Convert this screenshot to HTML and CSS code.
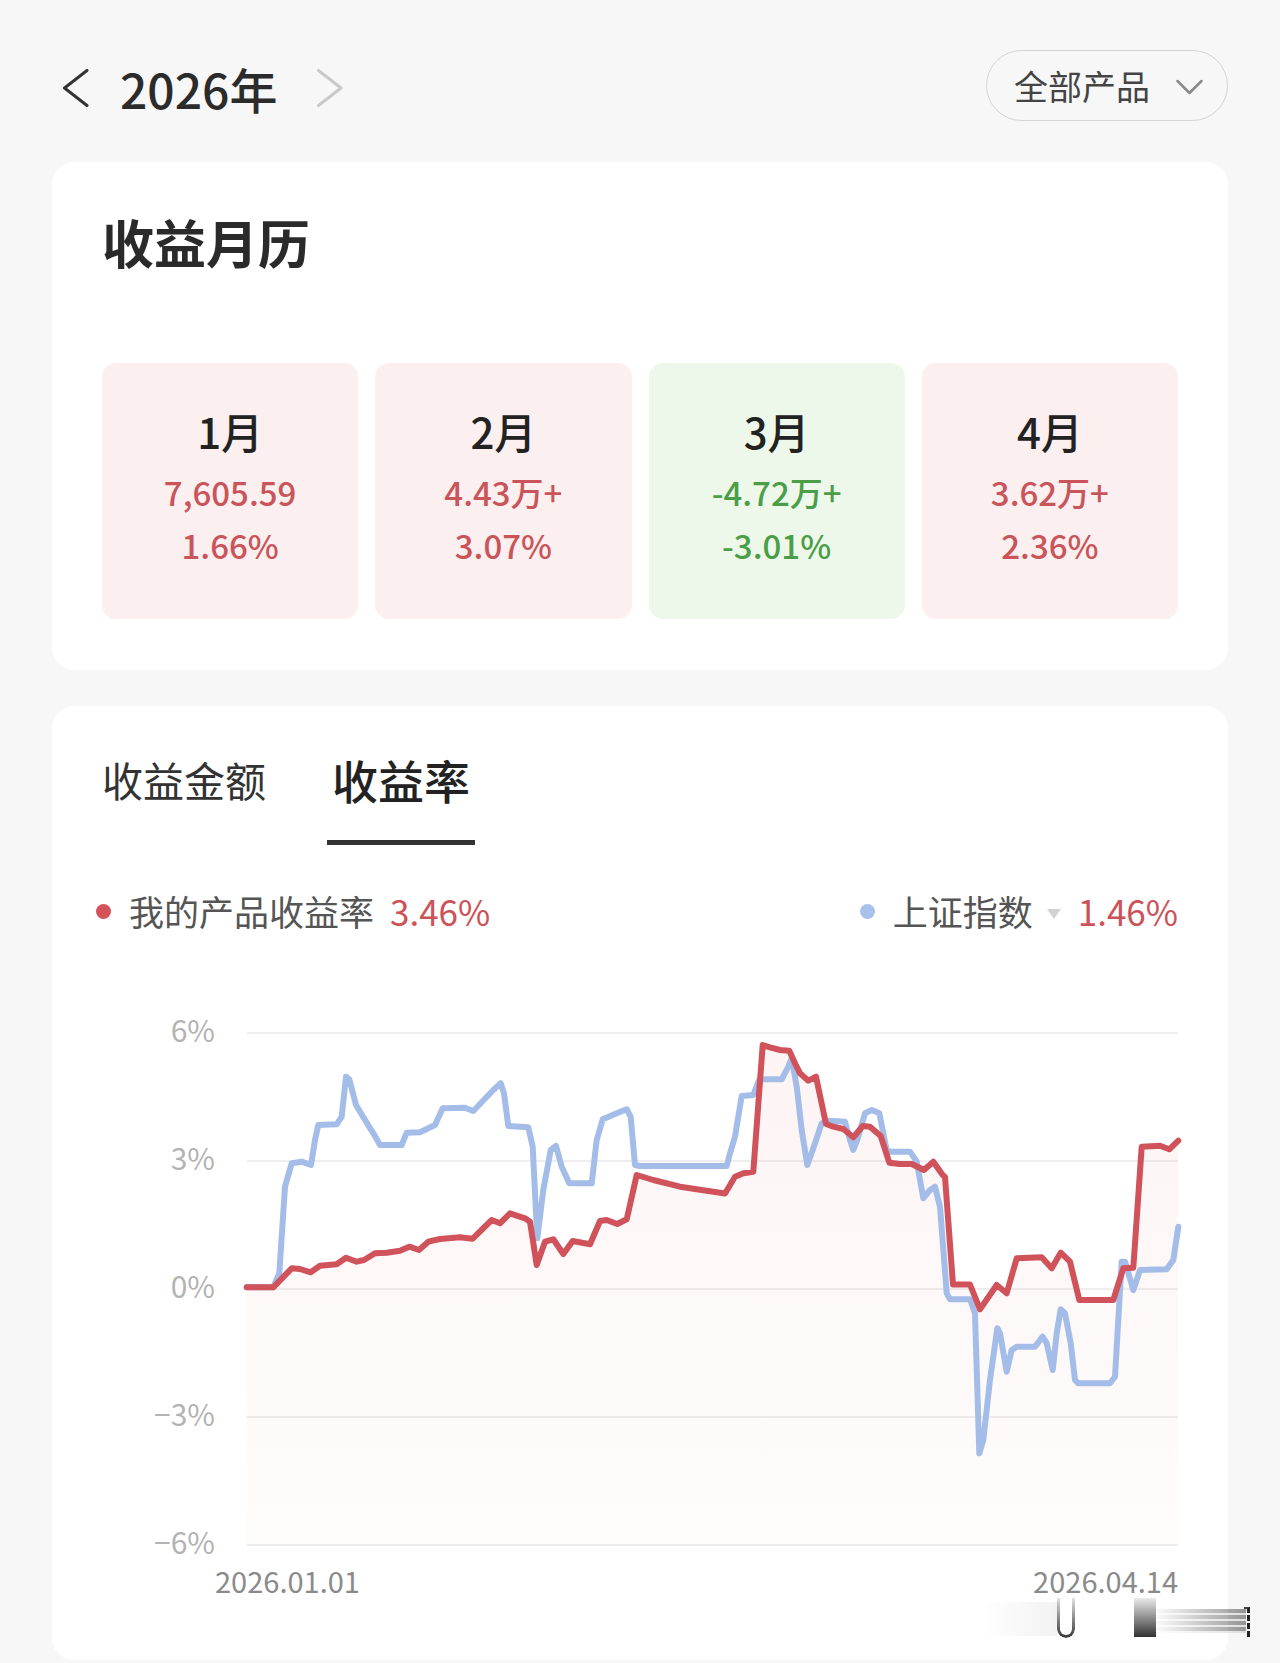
FILE: index.html
```html
<!DOCTYPE html>
<html lang="zh-CN">
<head>
<meta charset="utf-8">
<title>收益月历</title>
<link rel="stylesheet" href="styles.css">
</head>
<body>
<div class="page">
  <header class="topbar">
    <div class="year-nav">
      <svg class="chev chev-prev" width="26" height="38" viewBox="0 0 26 38"><polyline points="24,1.5 1.5,19 24,36.5"/></svg>
      <span class="year">2026年</span>
      <svg class="chev chev-next" width="26" height="38" viewBox="0 0 26 38"><polyline points="1.5,1.5 24,19 1.5,36.5"/></svg>
    </div>
    <div class="filter">
      <span>全部产品</span>
      <svg class="filter-arrow" width="27" height="16" viewBox="0 0 27 16"><polyline points="1.5,2 13.5,14 25.5,2"/></svg>
    </div>
  </header>

  <section class="card calendar">
    <h2 class="card-title">收益月历</h2>
    <div class="months">
      <div class="month up">
        <div class="m-name">1月</div>
        <div class="m-val">7,605.59</div>
        <div class="m-pct">1.66%</div>
      </div>
      <div class="month up">
        <div class="m-name">2月</div>
        <div class="m-val">4.43万+</div>
        <div class="m-pct">3.07%</div>
      </div>
      <div class="month down">
        <div class="m-name">3月</div>
        <div class="m-val">-4.72万+</div>
        <div class="m-pct">-3.01%</div>
      </div>
      <div class="month up">
        <div class="m-name">4月</div>
        <div class="m-val">3.62万+</div>
        <div class="m-pct">2.36%</div>
      </div>
    </div>
  </section>

  <section class="card trend">
    <div class="tabs">
      <div class="tab">收益金额</div>
      <div class="tab active">收益率</div>
    </div>

    <div class="legend">
      <div class="legend-item">
        <span class="dot dot-red"></span>
        <span class="legend-label">我的产品收益率</span>
        <span class="legend-value">3.46%</span>
      </div>
      <div class="legend-item">
        <span class="dot dot-blue"></span>
        <span class="legend-label">上证指数</span>
        <span class="tri"></span>
        <span class="legend-value">1.46%</span>
      </div>
    </div>

    <div class="chart">
      <div class="y-axis">
        <span>6%</span>
        <span>3%</span>
        <span>0%</span>
        <span>−3%</span>
        <span>−6%</span>
      </div>
      <svg class="plot" width="931" height="552" viewBox="247 1013 931 552">
        <defs>
          <linearGradient id="redfill" x1="0" y1="0" x2="0" y2="1">
            <stop offset="0" stop-color="#e05a5a" stop-opacity="0.065"/>
            <stop offset="1" stop-color="#e05a5a" stop-opacity="0.02"/>
          </linearGradient>
        </defs>
        <g class="grid">
          <line x1="247" y1="1033" x2="1178" y2="1033"/>
          <line x1="247" y1="1161" x2="1178" y2="1161"/>
          <line x1="247" y1="1289" x2="1178" y2="1289"/>
          <line x1="247" y1="1417" x2="1178" y2="1417"/>
          <line x1="247" y1="1545" x2="1178" y2="1545"/>
        </g>
        <polygon class="area" fill="url(#redfill)" points="246.7,1287.3 273.3,1287.3 291.7,1268.3 300,1269 310.7,1272.3 320,1265.7 336.7,1264.3 346,1257.7 356.7,1261.7 364,1260 375,1253.3 386.7,1252.7 400,1250.7 409.3,1246.7 419,1250 428.3,1241.7 440,1239 460,1237.3 472.7,1238.7 491.7,1220 500,1223.3 510,1213.3 525,1218.3 530,1221.7 536.7,1265 545,1241.7 553.3,1239.3 563.3,1254 572.7,1241 590,1244.3 600,1221 606.7,1220 617.3,1224 626.7,1219.3 636.7,1175 653.3,1180 680,1186.7 725,1193.5 735,1176.7 743.3,1173.3 753.3,1171.7 762.7,1045 770,1047.3 780,1050 789.3,1050.7 795,1063.3 800,1073.3 808.3,1080.7 816,1076.7 826,1124 833.3,1126.7 843.3,1129 853.3,1137.3 862.7,1126 870,1126.7 880.7,1136 889.3,1162.7 900,1164 911.7,1164 924,1170 933.3,1161.7 942.7,1175 945,1177 953,1284.5 970,1284.5 980,1309.3 996.7,1285 1006.7,1293.3 1016.7,1258.3 1041.7,1257.3 1051.7,1268.3 1060.7,1252.7 1070,1261.7 1079.3,1300 1113.3,1300 1123.3,1268.3 1133.3,1267.7 1141.7,1146.7 1160,1145.7 1169.3,1149.3 1178.3,1140.7 1178.3,1545 246.7,1545"/>
        <polyline class="line-blue" points="246.7,1287.3 273.3,1287.3 279.3,1273.3 285,1186.7 291.7,1163.3 301.7,1161.7 311,1165 315,1140 318.3,1125 336.7,1124.3 341.7,1116.7 346,1076.7 349.3,1079.3 356,1105 364,1118.3 373.3,1133.3 380,1145 401.7,1145 406.7,1132.7 420,1132.3 435,1125 442.7,1108.3 465,1107.7 473.3,1111 493.3,1090 500.7,1083.3 504,1093.3 508.3,1126 528.3,1127.3 532.7,1146.7 537.3,1238.3 543.3,1190 550.7,1150 556,1146 561.7,1166.7 569.3,1183.3 591.7,1183.3 596.7,1140 602.7,1119.3 616.7,1113.3 626.7,1109.3 630.7,1116.7 635,1165 640,1166 726.7,1166 730,1153.3 735,1136.7 741.7,1096 753.3,1095 759.3,1079.3 781.7,1079.3 788.3,1066.7 791.7,1058 796.7,1086.7 801.7,1130 807.3,1165 813.3,1148.3 821.7,1123.3 830,1120.7 845,1121.7 850,1140 853.3,1150 857.3,1140 865,1113.3 871.7,1110 879.3,1113.3 886.7,1150 890,1151.7 910,1151.7 916.7,1161.7 923.3,1198.3 930,1190 935,1186.7 940,1206.7 946.7,1293.3 950,1299.3 970,1299.3 975,1313.3 979.3,1453.3 983.3,1440 990,1380 997.3,1328.3 1000,1333.3 1006.7,1371.7 1011.7,1350 1016.7,1346.7 1035,1346.7 1042.7,1336.7 1046.7,1343.3 1052.7,1370 1056.7,1333.3 1060.7,1309.3 1065,1313.3 1070.7,1343.3 1075,1380 1078.3,1383.3 1110,1383.3 1115,1376.7 1121.7,1261.7 1125,1261.7 1133.3,1290 1140,1270 1166.7,1269.3 1173.3,1260 1178.3,1226.7"/>
        <polyline class="line-red" points="246.7,1287.3 273.3,1287.3 291.7,1268.3 300,1269 310.7,1272.3 320,1265.7 336.7,1264.3 346,1257.7 356.7,1261.7 364,1260 375,1253.3 386.7,1252.7 400,1250.7 409.3,1246.7 419,1250 428.3,1241.7 440,1239 460,1237.3 472.7,1238.7 491.7,1220 500,1223.3 510,1213.3 525,1218.3 530,1221.7 536.7,1265 545,1241.7 553.3,1239.3 563.3,1254 572.7,1241 590,1244.3 600,1221 606.7,1220 617.3,1224 626.7,1219.3 636.7,1175 653.3,1180 680,1186.7 725,1193.5 735,1176.7 743.3,1173.3 753.3,1171.7 762.7,1045 770,1047.3 780,1050 789.3,1050.7 795,1063.3 800,1073.3 808.3,1080.7 816,1076.7 826,1124 833.3,1126.7 843.3,1129 853.3,1137.3 862.7,1126 870,1126.7 880.7,1136 889.3,1162.7 900,1164 911.7,1164 924,1170 933.3,1161.7 942.7,1175 945,1177 953,1284.5 970,1284.5 980,1309.3 996.7,1285 1006.7,1293.3 1016.7,1258.3 1041.7,1257.3 1051.7,1268.3 1060.7,1252.7 1070,1261.7 1079.3,1300 1113.3,1300 1123.3,1268.3 1133.3,1267.7 1141.7,1146.7 1160,1145.7 1169.3,1149.3 1178.3,1140.7"/>
      </svg>
    </div>

    <div class="x-axis">
      <span>2026.01.01</span>
      <span>2026.04.14</span>
    </div>
  </section>
</div>

<div class="watermark" aria-hidden="true">
  <span class="wm-haze"></span>
  <span class="wm-u"></span>
  <span class="wm-rect"></span>
  <span class="wm-band"></span>
  <span class="wm-end"></span>
</div>
</body>
</html>
```

FILE: styles.css
```css
* {
  box-sizing: border-box;
}

html, body {
  margin: 0;
  padding: 0;
}

body {
  position: relative;
  background: #f7f7f7;
  font-family: "Noto Sans CJK SC", "Noto Sans", sans-serif;
  color: #333;
  width: 1280px;
  min-height: 1663px;
}

.page {
  padding: 50px 52px 0;
}

/* ---------- top bar ---------- */
.topbar {
  display: flex;
  align-items: center;
  justify-content: space-between;
  height: 71px;
  margin-bottom: 41px;
}

.year-nav {
  display: flex;
  align-items: center;
  margin-left: 11px;
  padding-top: 4px;
}

.chev {
  display: block;
  fill: none;
  stroke-width: 3;
  stroke-linecap: round;
  stroke-linejoin: round;
}

.chev-prev {
  stroke: #333;
}

.chev-next {
  stroke: #c9c9c9;
  margin-left: 40px;
}

.year {
  margin-left: 31px;
  font-size: 48px;
  line-height: 1;
  font-weight: 500;
  color: #2b2b2b;
}

.filter {
  display: flex;
  align-items: center;
  height: 71px;
  padding: 0 24px 0 27px;
  border: 1.5px solid #d4d4d4;
  border-radius: 36px;
  font-size: 34px;
  line-height: 1;
  color: #444;
  gap: 26px;
}

.filter-arrow {
  display: block;
  fill: none;
  stroke: #8a8a8a;
  stroke-width: 2.5;
  stroke-linecap: round;
  stroke-linejoin: round;
  margin-top: 2px;
}

/* ---------- cards ---------- */
.card {
  background: #fff;
  border-radius: 22px;
}

.calendar {
  padding: 54px 50px 51px;
}

.card-title {
  margin: 0 0 95px;
  font-size: 52px;
  line-height: 52px;
  font-weight: 600;
  color: #2a2a2a;
}

.months {
  display: grid;
  grid-template-columns: repeat(4, 1fr);
  gap: 17px;
}

.month {
  height: 256px;
  border-radius: 14px;
  padding-top: 38px;
  text-align: center;
}

.month.up {
  background: #fcefef;
  color: #c9545a;
}

.month.down {
  background: #eef8ea;
  color: #4a9e47;
}

.m-name {
  font-size: 42px;
  line-height: 60px;
  font-weight: 500;
  color: #222;
}

.m-val {
  font-size: 33px;
  line-height: 62px;
  font-weight: 500;
}

.m-pct {
  font-size: 33px;
  line-height: 44px;
  font-weight: 500;
}

/* ---------- trend card ---------- */
.trend {
  margin-top: 36px;
  padding: 50px 50px 65px;
}

.tabs {
  display: flex;
  align-items: flex-start;
}

.tab {
  font-size: 41px;
  line-height: 46px;
  color: #333;
}

.tab.active {
  margin-left: 61px;
  padding: 0 5px 38px;
  font-size: 46px;
  font-weight: 500;
  color: #222;
  border-bottom: 5px solid #333;
}

.legend {
  display: flex;
  align-items: center;
  justify-content: space-between;
  margin: 44px 0 0 -6px;
  height: 44px;
  font-size: 35px;
  line-height: 44px;
}

.legend-item {
  display: flex;
  align-items: center;
}

.dot {
  width: 15px;
  height: 15px;
  border-radius: 50%;
  margin-right: 18px;
}

.dot-red {
  background: #d4525a;
}

.dot-blue {
  background: #a8c1eb;
}

.legend-label {
  color: #555;
}

.legend-value {
  margin-left: 16px;
  color: #cc5258;
}

.tri {
  width: 0;
  height: 0;
  margin: 6px 0 0 14px;
  border-left: 7px solid transparent;
  border-right: 7px solid transparent;
  border-top: 10px solid #d2d2d2;
}

.tri + .legend-value {
  margin-left: 17px;
}

/* ---------- chart ---------- */
.chart {
  display: flex;
  margin-top: 80px;
  gap: 32px;
}

.y-axis {
  width: 113px;
  height: 552px;
  margin-top: -4px;
  display: flex;
  flex-direction: column;
  justify-content: space-between;
  align-items: flex-end;
  font-size: 30px;
  line-height: 40px;
  color: #b3b3b3;
}

.plot {
  display: block;
  overflow: visible;
}

.grid line {
  stroke: #e9e9e9;
  stroke-width: 1.5;
}

.line-blue {
  fill: none;
  stroke: #a4bde8;
  stroke-width: 6;
  stroke-linejoin: round;
  stroke-linecap: round;
}

.line-red {
  fill: none;
  stroke: #d0525a;
  stroke-width: 6;
  stroke-linejoin: round;
  stroke-linecap: round;
}

.x-axis {
  display: flex;
  justify-content: space-between;
  margin-left: 113px;
  font-size: 29px;
  line-height: 30px;
  color: #8a8a8a;
}

/* ---------- blurred watermark overlay ---------- */
.watermark {
  position: absolute;
  left: 0;
  top: 0;
  width: 1280px;
  height: 1663px;
  pointer-events: none;
}

.watermark span {
  position: absolute;
}

.wm-haze {
  left: 980px;
  top: 1602px;
  width: 78px;
  height: 34px;
  background: linear-gradient(to right, rgba(0,0,0,0), rgba(0,0,0,0.05));
}

.wm-u {
  left: 1057px;
  top: 1598px;
  width: 18px;
  height: 40px;
  border: 3px solid rgba(20,20,20,0.85);
  border-top: none;
  border-radius: 0 0 9px 9px;
  -webkit-mask-image: linear-gradient(to bottom, rgba(0,0,0,0.15), #000);
  mask-image: linear-gradient(to bottom, rgba(0,0,0,0.15), #000);
}

.wm-rect {
  left: 1134px;
  top: 1598px;
  width: 22px;
  height: 39px;
  background: linear-gradient(to bottom, rgba(0,0,0,0.08), rgba(0,0,0,0.8));
}

.wm-band {
  left: 1156px;
  top: 1609px;
  width: 90px;
  height: 24px;
  background:
    repeating-linear-gradient(to bottom, rgba(255,255,255,0) 0, rgba(255,255,255,0) 4px, rgba(255,255,255,0.7) 4px, rgba(255,255,255,0.7) 6px),
    linear-gradient(to right, rgba(0,0,0,0.02), rgba(0,0,0,0.4));
}

.wm-end {
  left: 1244px;
  top: 1607px;
  width: 6px;
  height: 30px;
  border-right: 3px dashed #222;
  border-top: 2px solid #444;
}
```
